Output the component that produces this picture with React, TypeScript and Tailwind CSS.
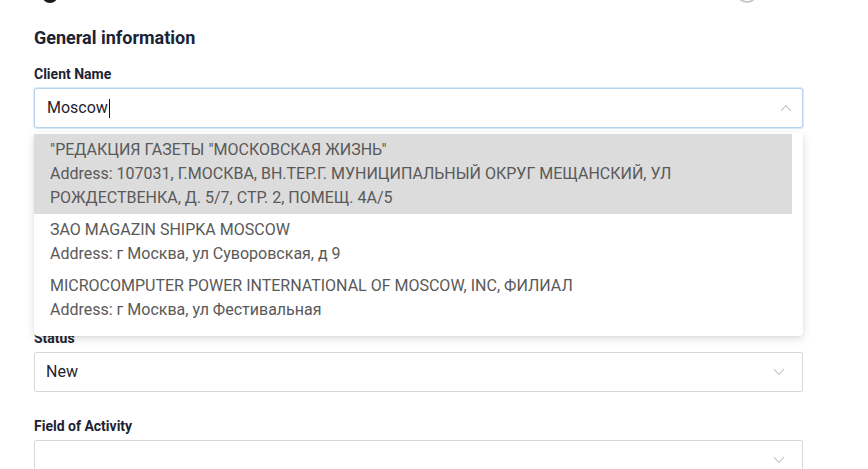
import React from "react";

const ChevronUp = () => (
  <svg width="12" height="8" viewBox="0 0 12 8" fill="none">
    <path d="M1 7 L6 1.5 L11 7" stroke="#bdbdbd" strokeWidth="1.1" />
  </svg>
);

const ChevronDown = () => (
  <svg width="12" height="8" viewBox="0 0 12 8" fill="none">
    <path d="M1 1 L6 6.5 L11 1" stroke="#bdbdbd" strokeWidth="1.1" />
  </svg>
);

function Field({ label, value }: { label: string; value?: string }) {
  return (
    <div className="flex flex-col gap-[4px]">
      <div className="text-[14px] leading-[20px] font-bold text-[#1c2333]">{label}</div>
      <div className="h-[40px] border border-[#d9d9d9] rounded-[2px] flex items-center pl-[11px] pr-[17px] bg-white">
        <span className="flex-1 text-[16px] leading-[24px] text-[#1f2430]">{value}</span>
        <ChevronDown />
      </div>
    </div>
  );
}

const options = [
  {
    name: "\"РЕДАКЦИЯ ГАЗЕТЫ \"МОСКОВСКАЯ ЖИЗНЬ\"",
    address:
      "Address: 107031, Г.МОСКВА, ВН.ТЕР.Г. МУНИЦИПАЛЬНЫЙ ОКРУГ МЕЩАНСКИЙ, УЛ РОЖДЕСТВЕНКА, Д. 5/7, СТР. 2, ПОМЕЩ. 4А/5",
    active: true,
  },
  { name: "ЗАО MAGAZIN SHIPKA MOSCOW", address: "Address: г Москва, ул Суворовская, д 9" },
  {
    name: "MICROCOMPUTER POWER INTERNATIONAL OF MOSCOW, INC, ФИЛИАЛ",
    address: "Address: г Москва, ул Фестивальная",
  },
];

export default function App() {
  return (
    <div
      className="w-[868px] h-[469px] bg-white overflow-hidden relative"
      style={{ fontFamily: "Roboto, 'Noto Sans', sans-serif" }}
    >
      <div className="h-[26px] relative overflow-hidden">
        <div className="absolute left-[42px] top-[-13px] w-[16px] h-[16px] rounded-full bg-[#1a1a1a]" />
        <div className="absolute left-[736px] top-[-19px] w-[22px] h-[22px] rounded-full border-2 border-[#c8c8c8]" />
      </div>
      <div className="w-[769px] ml-[34px] flex flex-col">
        <h2 className="text-[18px] leading-[24px] font-bold text-[#1b2335]">General information</h2>
        <div className="mt-[14px] flex flex-col gap-[24px] relative">
          <div className="flex flex-col gap-[4px] relative">
            <div className="text-[14px] leading-[20px] font-bold text-[#1c2333]">Client Name</div>
            <div className="h-[40px] border border-[#b7d3f0] shadow-[0_0_0_1px_#d9eafc] rounded-[3px] flex items-center pl-[12px] pr-[10px] bg-white">
              <span className="flex-1 text-[16px] leading-[24px] text-[#1f2430] flex items-center">
                Moscow<span className="inline-block w-[1px] h-[19px] bg-[#111] ml-[1px]" />
              </span>
              <ChevronUp />
            </div>
            <div className="absolute left-0 top-[68px] w-[769px] h-[204px] bg-white rounded-[4px] shadow-[0_3px_10px_rgba(0,0,0,0.12),0_1px_3px_rgba(0,0,0,0.06)] z-10 pt-[2px]">
              <div className="mr-[11px] flex flex-col">
                {options.map((o, i) => (
                  <div
                    key={i}
                    className={`px-[16px] py-[4px] text-[16px] leading-[24px] text-[#595959] ${o.active ? "bg-[#dcdcdc]" : ""}`}
                  >
                    <div>{o.name}</div>
                    <div className="pr-[100px]">{o.address}</div>
                  </div>
                ))}
              </div>
            </div>
          </div>
          <div className="h-[152px]" />
          <Field label="Status" value="New" />
          <Field label="Field of Activity" />
        </div>
      </div>
    </div>
  );
}
